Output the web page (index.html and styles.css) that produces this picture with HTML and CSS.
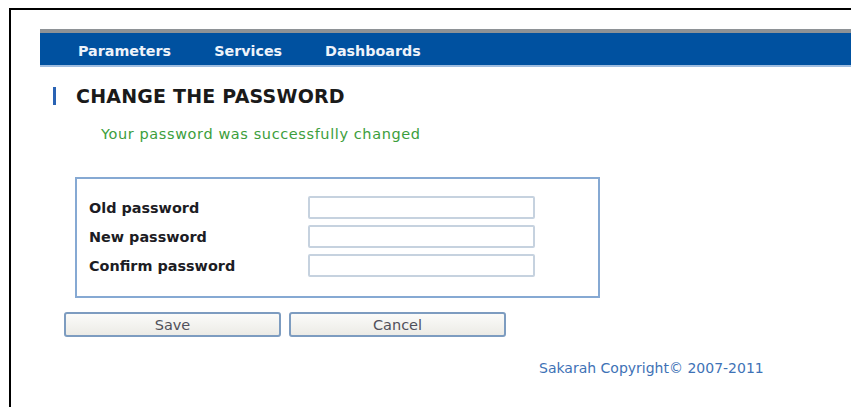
FILE: index.html
```html
<!DOCTYPE html>
<html lang="en">
<head>
<meta charset="utf-8">
<title>Change the password</title>
<link rel="stylesheet" href="styles.css">
</head>
<body>
<div class="frame">
  <nav class="menu">
    <a class="menu-item" href="#">Parameters</a>
    <a class="menu-item" href="#">Services</a>
    <a class="menu-item" href="#">Dashboards</a>
  </nav>

  <h1 class="title">CHANGE THE PASSWORD</h1>
  <p class="notice">Your password was successfully changed</p>

  <form class="pw-form">
    <div class="pw-box">
      <div class="pw-row">
        <label class="pw-label" for="old">Old password</label>
        <input class="pw-input" id="old" type="password">
      </div>
      <div class="pw-row">
        <label class="pw-label" for="new">New password</label>
        <input class="pw-input" id="new" type="password">
      </div>
      <div class="pw-row">
        <label class="pw-label" for="confirm">Confirm password</label>
        <input class="pw-input" id="confirm" type="password">
      </div>
    </div>
    <div class="actions">
      <button class="btn" type="submit">Save</button>
      <button class="btn" type="button">Cancel</button>
    </div>
  </form>

  <footer class="footer">Sakarah Copyright© 2007-2011</footer>
</div>
</body>
</html>
```

FILE: styles.css
```css
html, body {
  margin: 0;
  padding: 0;
  background: #ffffff;
}

body {
  font-family: "DejaVu Sans", Verdana, sans-serif;
  width: 851px;
  height: 409px;
  overflow: hidden;
}

.frame {
  margin: 8px 0 0 9px;
  border-top: 2px solid #000;
  border-left: 2px solid #000;
  height: 399px;
  box-sizing: border-box;
  padding-top: 19px;
}

/* top menu bar: grey rim, blue band, pale underline */
.menu {
  margin-left: 29px;
  height: 38px;
  box-sizing: border-box;
  padding: 3px 0 0 38px;
  background: #0051a0;
  border-top: 4px solid #8e9296;
  border-bottom: 2px solid #9fbde0;
  display: flex;
  align-items: center;
}

.menu .menu-item {
  color: #eef3fa;
  font-weight: bold;
  font-size: 14.3px;
  text-decoration: none;
  margin-right: 43px;
}

.title {
  margin: 20px 0 0 42px;
  padding-left: 20px;
  border-left: 3px solid #2a63b4;
  font-size: 19px;
  line-height: 18px;
  font-weight: bold;
  color: #1a1a1a;
  letter-spacing: 0.2px;
}

.notice {
  margin: 21px 0 0 90px;
  font-size: 14.5px;
  letter-spacing: 0.6px;
  color: #3c9e3c;
}

.pw-form {
  margin: 0;
}

.pw-box {
  margin: 35px 0 0 64px;
  width: 525px;
  height: 121px;
  box-sizing: border-box;
  border: 2px solid #86a9d3;
  padding: 17px 0 0 12px;
  display: flex;
  flex-direction: column;
  gap: 6px;
}

.pw-row {
  display: flex;
  align-items: center;
  height: 23px;
}

.pw-label {
  width: 219px;
  font-weight: bold;
  font-size: 14.4px;
  color: #1c1c24;
}

.pw-input {
  width: 227px;
  height: 23px;
  box-sizing: border-box;
  border: 2px solid #c6d2df;
  border-radius: 2px;
  background: #fff;
  padding: 0;
  margin: 0;
}

.actions {
  display: flex;
  gap: 8px;
  margin: 14px 0 0 53px;
}

.btn {
  width: 217px;
  height: 25px;
  box-sizing: border-box;
  border: 2px solid #7d9cc0;
  border-radius: 3px;
  background: linear-gradient(#fbfbf9, #ecebe6);
  font-family: "DejaVu Sans", Verdana, sans-serif;
  font-size: 14.5px;
  color: #50505a;
  padding: 0;
}

.footer {
  margin: 23px 0 0 528px;
  font-size: 14px;
  color: #3e72b6;
}
```
